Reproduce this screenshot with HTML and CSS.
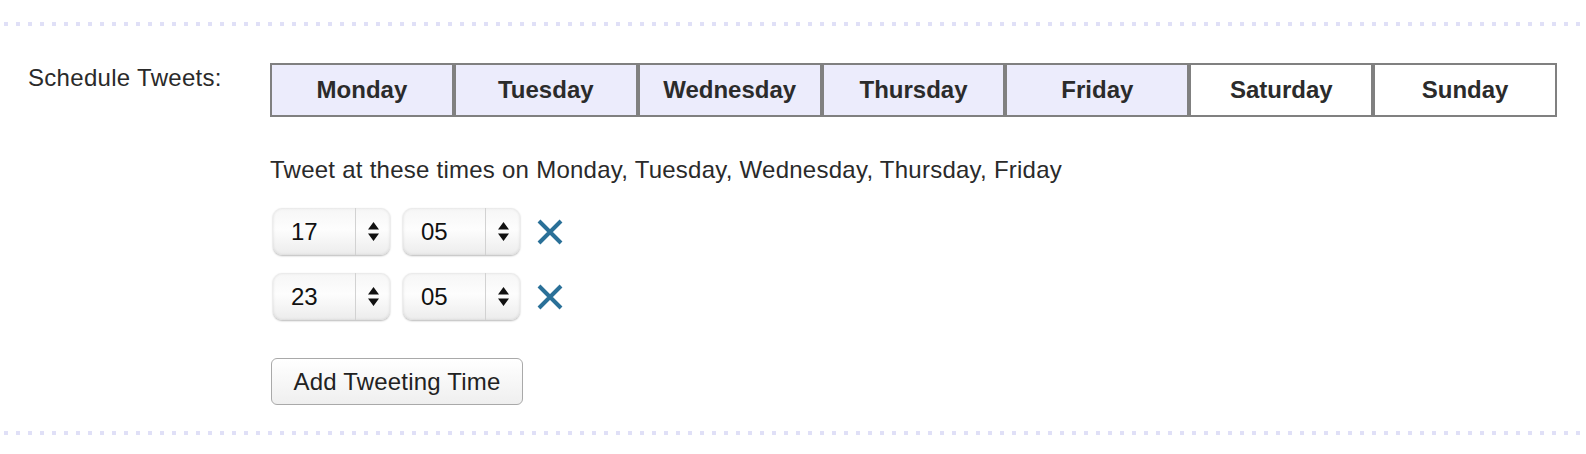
FILE: index.html
```html
<!DOCTYPE html>
<html>
<head>
<meta charset="utf-8">
<title>Schedule Tweets</title>
<link rel="stylesheet" href="styles.css">
</head>
<body>
<div class="rule"></div>
<div class="row">
  <div class="label">Schedule Tweets:</div>
  <div class="content">
    <div class="days">
      <button class="day on">Monday</button>
      <button class="day on">Tuesday</button>
      <button class="day on">Wednesday</button>
      <button class="day on">Thursday</button>
      <button class="day on">Friday</button>
      <button class="day">Saturday</button>
      <button class="day">Sunday</button>
    </div>
    <p class="note">Tweet at these times on Monday, Tuesday, Wednesday, Thursday, Friday</p>
    <div class="times">
      <div class="time-row">
        <div class="select"><span class="val">17</span><span class="arrows"><svg width="11" height="19" viewBox="0 0 11 19"><path d="M5.5 0 L11 7.5 L0 7.5 Z M0 11.5 L11 11.5 L5.5 19 Z" fill="#111"/></svg></span></div>
        <div class="select"><span class="val">05</span><span class="arrows"><svg width="11" height="19" viewBox="0 0 11 19"><path d="M5.5 0 L11 7.5 L0 7.5 Z M0 11.5 L11 11.5 L5.5 19 Z" fill="#111"/></svg></span></div>
        <svg class="remove" width="28" height="28" viewBox="0 0 28 28"><path d="M3 3 L25 25 M25 3 L3 25" stroke="#2a7098" stroke-width="4" stroke-linecap="butt"/></svg>
      </div>
      <div class="time-row">
        <div class="select"><span class="val">23</span><span class="arrows"><svg width="11" height="19" viewBox="0 0 11 19"><path d="M5.5 0 L11 7.5 L0 7.5 Z M0 11.5 L11 11.5 L5.5 19 Z" fill="#111"/></svg></span></div>
        <div class="select"><span class="val">05</span><span class="arrows"><svg width="11" height="19" viewBox="0 0 11 19"><path d="M5.5 0 L11 7.5 L0 7.5 Z M0 11.5 L11 11.5 L5.5 19 Z" fill="#111"/></svg></span></div>
        <svg class="remove" width="28" height="28" viewBox="0 0 28 28"><path d="M3 3 L25 25 M25 3 L3 25" stroke="#2a7098" stroke-width="4" stroke-linecap="butt"/></svg>
      </div>
    </div>
    <button class="add">Add Tweeting Time</button>
  </div>
</div>
<div class="rule"></div>
</body>
</html>
```

FILE: styles.css
```css
html, body {
  margin: 0;
  padding: 0;
  background: #fff;
}
body {
  font-family: "Liberation Sans", Arial, Helvetica, sans-serif;
  font-size: 24px;
  color: #2a2a2a;
  padding-top: 22px;
}
.rule {
  height: 4px;
  margin-left: 4px;
  background: repeating-linear-gradient(to right, #e0e0f7 0, #e0e0f7 4px, transparent 4px, transparent 12px);
}
.row {
  display: flex;
  padding: 37px 0 26px 0;
}
.label {
  width: 242px;
  padding-left: 28px;
  line-height: 28px;
  margin-top: 1px;
  letter-spacing: 0.3px;
}
.content {
  display: flex;
  flex-direction: column;
  align-items: flex-start;
}
.days {
  display: flex;
  width: 1287px;
}
.day {
  flex: 1;
  height: 54px;
  border: 2px solid #808080;
  background: #fff;
  font-family: "Liberation Sans", Arial, Helvetica, sans-serif;
  font-weight: bold;
  font-size: 24px;
  color: #2b2b2b;
  padding: 0;
  margin: 0;
}
.day.on {
  background: #ececfc;
}
.note {
  margin: 39px 0 0 0;
  line-height: 28px;
  letter-spacing: 0.25px;
}
.times {
  display: flex;
  flex-direction: column;
  gap: 18px;
  margin-top: 24px;
  margin-left: 3px;
}
.time-row {
  display: flex;
  align-items: center;
  gap: 13px;
}
.select {
  display: flex;
  width: 117px;
  height: 47px;
  box-sizing: border-box;
  border-radius: 9px;
  background: linear-gradient(to bottom, #f6f6f6 0%, #fdfdfd 45%, #ececec 100%);
  box-shadow: 0 1px 2px rgba(0, 0, 0, 0.28), inset 0 0 3px rgba(0, 0, 0, 0.12);
  color: #111;
}
.val {
  width: 83px;
  box-sizing: border-box;
  padding-left: 18px;
  line-height: 47px;
  border-right: 1px solid #d2d2d2;
}
.arrows {
  flex: 1;
  display: flex;
  align-items: center;
  justify-content: center;
}
.remove {
  margin-left: 3px;
}
.add {
  margin-top: 38px;
  width: 252px;
  height: 47px;
  border: 1px solid #a9a9a9;
  border-radius: 6px;
  background: linear-gradient(to bottom, #ffffff, #efefef);
  font-family: "Liberation Sans", Arial, Helvetica, sans-serif;
  font-size: 24px;
  letter-spacing: 0.2px;
  color: #222;
  padding: 0;
  margin-left: 1px;
}
```
